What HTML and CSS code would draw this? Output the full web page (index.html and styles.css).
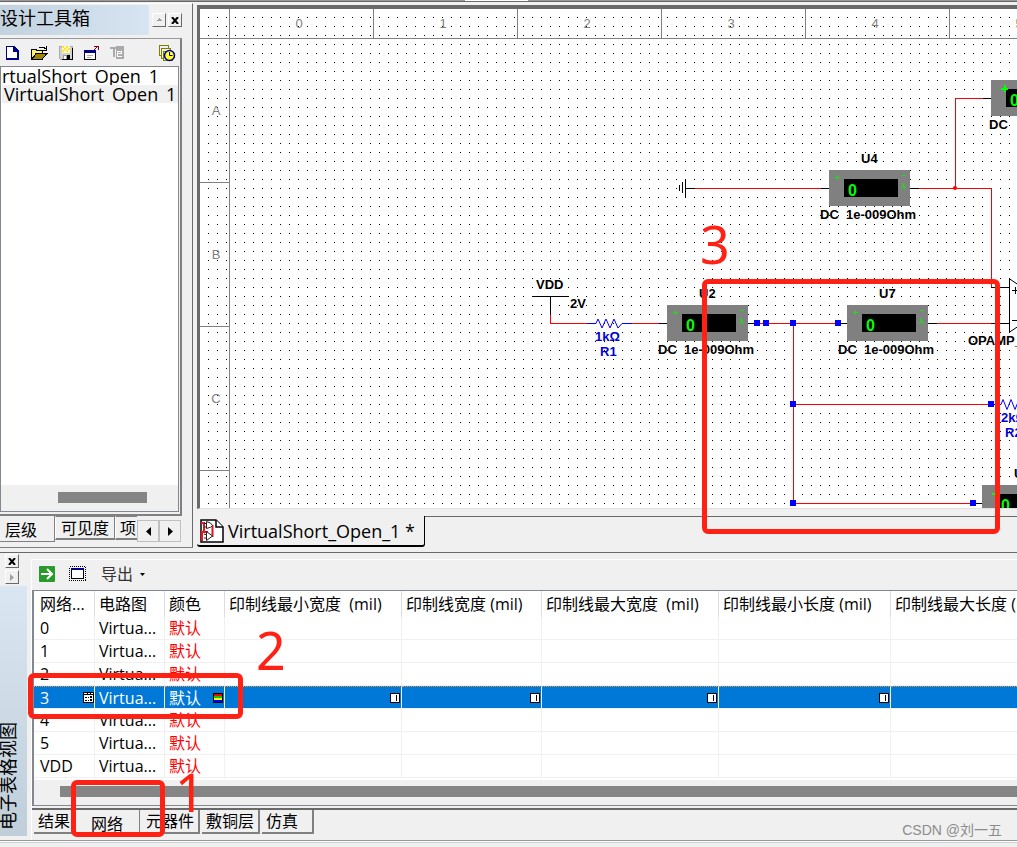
FILE: index.html
```html
<!DOCTYPE html>
<html lang="zh-CN">
<head>
<meta charset="utf-8">
<title>VirtualShort_Open_1</title>
<link rel="stylesheet" href="styles.css">
</head>
<body>
<div class="app">
  <div class="top-edge"><span class="top-edge-gap"></span></div>
  <div class="upper">
    <aside class="toolbox">
      <header class="toolbox-head">
        <h1 class="toolbox-title">设计工具箱</h1>
        <div class="head-buttons">
          <button class="mini" aria-label="折叠"><svg width="7" height="4"><path d="M3 0h1v1h1v1h1v1h-5v-1h1v-1h1z" fill="#a0a0a0"/></svg></button>
          <button class="mini" aria-label="关闭"><svg width="8" height="7"><path d="M1 0l6 7M7 0l-6 7" stroke="#000" stroke-width="2"/></svg></button>
        </div>
      </header>
      <div class="toolbox-body">
        <div class="toolbox-tools">
          <button class="tool" aria-label="新建"><svg width="16" height="16" shape-rendering="crispEdges"><path d="M2 1h8l5 5v9h-13z" fill="#fff"/><path d="M2.500 15v-13.500h8" fill="none" stroke="#00008b"/><path d="M10 1v5h5M10 2l4 4v8h-12" fill="none" stroke="#00008b" stroke-width="2"/></svg></button>
          <button class="tool" aria-label="打开"><svg width="18" height="16" shape-rendering="crispEdges"><path d="M1.500 14v-9l1-1h3l1 1h6v3h-6z" fill="#fff27a" stroke="#000"/><path d="M2 14.500l4-6h11l-5 6z" fill="#9a8600" stroke="#000"/><path d="M9.500 3l1-1h3l2 2M16.500 1v4h-4" fill="none" stroke="#000"/></svg></button>
          <button class="tool" aria-label="保存"><svg width="16" height="16" shape-rendering="crispEdges"><path d="M1 1h13v13h-12l-1-1z" fill="#d2d2d2" stroke="#aaa"/><path d="M4 1h8v7h-8z" fill="#fffbc0"/><path d="M4 1h2v2h-2zM8 1h2v2h-2zM6 3h2v2h-2zM10 3h2v2h-2zM4 5h2v2h-2zM8 5h2v2h-2z" fill="#ffe23a"/><path d="M14 3v11h-10" fill="none" stroke="#000"/><path d="M5 10h7v4h-7z" fill="#999"/><path d="M9 10h3v4h-3z" fill="#000"/><path d="M6 11h2v3h-2z" fill="#fff"/></svg></button>
          <button class="tool" aria-label="关闭窗口"><svg width="16" height="16" shape-rendering="crispEdges"><path d="M.5 5.500h11v9h-11z" fill="#fff" stroke="#000"/><path d="M0 5h12v3h-12z" fill="#00008b"/><path d="M3 10.500h6M3 12.500h4" stroke="#aaa"/><path d="M9.500 5.500l4-4M10 1h4v4" fill="none" stroke="#800010"/></svg></button>
          <button class="tool" aria-label="重命名" disabled><svg width="16" height="16" shape-rendering="crispEdges"><path d="M6 1h8v13h-8z" fill="#aaa"/><path d="M0 3h8M4 3v9" stroke="#aaa" stroke-width="2" fill="none"/><path d="M7.500 8.500h4v-2h-4v5h4" stroke="#fff" fill="none"/></svg></button>
          <button class="tool tool-last" aria-label="历史"><svg width="18" height="18"><g fill="#f0f0f0" stroke="#808000" shape-rendering="crispEdges"><path d="M1.500 1.500h9v10h-9z"/><path d="M3.500 4.500h9v10h-9z"/><path d="M5.500 7.500h9v9h-9z"/></g><circle cx="11.500" cy="11.500" r="5" fill="#ffff20" stroke="#00008b" stroke-width="1.500"/><path d="M11.500 8v3.500h3" fill="none" stroke="#00008b"/></svg></button>
        </div>
        <div class="tree">
          <div class="tree-row">rtualShort_Open_1</div>
          <div class="tree-row tree-row-on">VirtualShort_Open_1</div>
          <div class="tree-scroll"><span class="tree-thumb"></span></div>
        </div>
      </div>
      <nav class="side-tabs">
        <button class="side-tab side-tab-on">层级</button>
        <button class="side-tab">可见度</button>
        <button class="side-tab side-tab-cut">项</button>
        <button class="arrow" aria-label="向左"><svg width="5" height="9"><path d="M5 0v9l-5-4.500z"/></svg></button>
        <button class="arrow" aria-label="向右"><svg width="5" height="9"><path d="M0 0v9l5-4.500z"/></svg></button>
      </nav>
    </aside>

    <main class="workspace">
      <div class="canvas">
        <svg class="sheet" role="img" aria-label="电路图">
          <defs>
            <pattern id="dots" x="208" y="17" width="9" height="9" patternUnits="userSpaceOnUse"><rect width="1" height="1" fill="#000"/></pattern>
            <g id="meter">
              <rect width="81" height="36" fill="#808080"/>
              <rect x="15" y="9" width="54" height="18" fill="#000"/>
              <text x="19" y="26" class="digit">0</text>
              <path d="M73 5.500h4" stroke="#1fdc1f" shape-rendering="crispEdges"/>
              <path d="M72.500 19l2-3.500M73 13.500l1 .5 2.500 5" stroke="#1fdc1f" stroke-width="1.200" fill="none"/>
            </g>
            <path id="plus" d="M6 7.500h5M8.500 5v5" stroke="#1fdc1f" fill="none" shape-rendering="crispEdges"/>
            <path id="plus-big" d="M10 9h7M13.500 5v7" stroke="#00ff00" stroke-width="2" fill="none" shape-rendering="crispEdges"/>
            <rect id="node" x="-3" y="-3" width="6" height="6" fill="#00f"/>
          </defs>
          <g transform="translate(-200 -9)">
            <rect x="200" y="9" width="3000" height="2000" fill="url(#dots)" shape-rendering="crispEdges"/>
            <path class="ruler" d="M229.500 9v2000M200 38.500h3000M373.500 9v29M517.500 9v29M661.500 9v29M805.500 9v29M949.500 9v29M200 182.500h29M200 326.500h29M200 470.500h29"/>
            <g class="ruler-text">
              <text x="299" y="28">0</text><text x="443" y="28">1</text><text x="587" y="28">2</text><text x="731" y="28">3</text><text x="875" y="28">4</text><text x="1019" y="28">5</text>
              <text x="216" y="115">A</text><text x="216" y="259">B</text><text x="216" y="403">C</text>
            </g>
            <path class="wire" d="M695 188.500h126M919 188.500h72.500v99M955.500 188v-89.500h28M550.500 315v8.500h37M632 323.500h27M757 323.500h81M793.500 323v180M793 404.500h198M793 503.500h180M937 323.500h54"/>
            <path class="lead" d="M685.500 179v19M682.500 182v11M679.500 185v6M686 188.500h9M821 188.500h8M910 188.500h9M983 98.500h9M532 296.500h37M550.500 296v19M659 323.500h8M748 323.500h9M838 323.500h9M928 323.500h9M991 287.500h18M991 323.500h18M976 503.500h6"/>
            <path class="part" d="M1009.500 278v54M1009 278.500l40 27-40 27M1012 290.500h6M1015.500 287v7M1012 320.500h8"/>
            <path class="resistor" d="M587 323.500h9l2-4.500 4 9 4-9 4 9 4-9 4 9 4-4.500h10M994 404.500h7l2-5 4 10 4-10 4 10 4-10"/>
            <circle cx="955" cy="188" r="2" fill="#f00"/>
            <use href="#meter" x="829" y="170"/><use href="#plus" x="829" y="170"/>
            <use href="#meter" x="667" y="305"/><use href="#plus" x="667" y="305"/>
            <use href="#meter" x="847" y="305"/><use href="#plus" x="847" y="305"/>
            <use href="#meter" x="991" y="80"/><use href="#plus-big" x="991" y="80"/>
            <use href="#meter" x="982" y="485"/><use href="#plus-big" x="982" y="485"/>
            <g class="label">
              <text x="861" y="163">U4</text><text x="820" y="219" xml:space="preserve">DC  1e-009Ohm</text>
              <text x="699" y="298">U2</text><text x="658" y="354" xml:space="preserve">DC  1e-009Ohm</text>
              <text x="879" y="298">U7</text><text x="838" y="354" xml:space="preserve">DC  1e-009Ohm</text>
              <text x="989" y="129">DC</text><text x="1014" y="478">U5</text>
              <text x="536" y="289">VDD</text><text x="570" y="308">2V</text>
              <text x="968" y="345">OPAMP_3T</text>
            </g>
            <g class="label label-blue">
              <text x="595" y="341">1kΩ</text><text x="600" y="356">R1</text>
              <text x="1001" y="422">2kΩ</text><text x="1005" y="437">R2</text>
            </g>
            <use href="#node" x="757" y="323"/><use href="#node" x="766" y="323"/><use href="#node" x="793" y="323"/><use href="#node" x="838" y="323"/>
            <use href="#node" x="793" y="404"/><use href="#node" x="991" y="404"/><use href="#node" x="793" y="503"/><use href="#node" x="973" y="503"/>
          </g>
        </svg>
      </div>
      <nav class="doc-tabs">
        <button class="doc-tab">
          <svg width="24" height="24"><path d="M1 1h15l7 7v15h-22z" fill="#fff" stroke="#000" stroke-width="1.500"/><path d="M16 1v7h7" fill="#fff" stroke="#000" stroke-width="1.500"/><path d="M1 4h3v9h-2v9M4 13h4M9 7h3.500v10h-5" fill="none" stroke="#f01020" stroke-width="2"/><path d="M6.500 2.500q5 1 6 4-1 2-6 3zM6.500 12.500l6 4.500-6 4.500z" fill="#fff" stroke="#222"/><path d="M4 4.500h3M4 8h3M4 15l3 1M4 19h3" stroke="#222"/></svg>
          <span>VirtualShort_Open_1 *</span>
        </button>
        <span class="doc-line"></span>
      </nav>
    </main>
  </div>

  <section class="lower">
    <div class="grip">
      <button class="mini" aria-label="关闭"><svg width="8" height="7"><path d="M1 0l6 7M7 0l-6 7" stroke="#000" stroke-width="2"/></svg></button>
      <button class="mini" aria-label="展开"><svg width="4" height="7"><path d="M0 0l4 3.500-4 3.500z" fill="#a0a0a0"/></svg></button>
      <div class="grip-title">电子表格视图</div>
    </div>
    <div class="sheet-view">
      <div class="sheet-tools">
        <button class="tool" aria-label="转到"><svg width="16" height="16"><rect width="16" height="16" rx="1" fill="#299b2d"/><path d="M2 8h11M8 3l5 5-5 5" fill="none" stroke="#fff" stroke-width="2"/></svg></button>
        <button class="tool" aria-label="选择"><svg width="18" height="16" shape-rendering="crispEdges"><rect x=".5" y=".5" width="16" height="14" fill="none" stroke="#000" stroke-dasharray="1 1"/><rect x="2.500" y="2.500" width="12" height="10" fill="#fff" stroke="#000"/><path d="M2 2h13v2h-13z" fill="#00008b"/></svg></button>
        <button class="export">导出 <svg width="5" height="3"><path d="M0 0h5l-2.500 3z"/></svg></button>
      </div>
      <div class="grid-box">
        <table class="grid">
          <colgroup><col class="c-net"><col class="c-sch"><col class="c-color"><col class="c-wide"><col class="c-mid"><col class="c-wide"><col class="c-len"><col class="c-len"></colgroup>
          <thead><tr><th>网络...</th><th>电路图</th><th>颜色</th><th>印制线最小宽度&nbsp; (mil)</th><th>印制线宽度 (mil)</th><th>印制线最大宽度&nbsp; (mil)</th><th>印制线最小长度 (mil)</th><th>印制线最大长度 (mil)</th></tr></thead>
          <tbody>
            <tr><td>0</td><td>Virtua...</td><td class="red">默认</td><td></td><td></td><td></td><td></td><td></td></tr>
            <tr><td>1</td><td>Virtua...</td><td class="red">默认</td><td></td><td></td><td></td><td></td><td></td></tr>
            <tr><td>2</td><td>Virtua...</td><td class="red">默认</td><td></td><td></td><td></td><td></td><td></td></tr>
            <tr class="selected">
              <td><div class="cell"><span>3</span><button class="cell-btn" aria-label="编辑网络"><svg width="11" height="11" shape-rendering="crispEdges"><path d="M0 0h11v11h-11z"/><path d="M1 1h3v1h-3zM5 1h2v1h-2zM8 1h2v1h-2zM1 3h9v7h-9z" fill="#fff"/><path d="M2 5h2v1h-2zM2 8h2v1h-2zM5 5h1v1h-1zM5 8h1v1h-1zM7 4h2v2h-2zM7 7h2v2h-2z"/></svg></button></div></td>
              <td>Virtua...</td>
              <td><div class="cell cell-pad"><span>默认</span><button class="cell-btn" aria-label="颜色"><svg width="10" height="10" shape-rendering="crispEdges"><path d="M0 0h10v10h-10z"/><path d="M1 1h8v2h-8z" fill="#f00"/><path d="M1 3h8v2h-8z" fill="#0c0"/><path d="M1 5h8v2h-8z" fill="#ff0"/><path d="M1 7h8v2h-8z" fill="#00f"/></svg></button></div></td>
              <td><div class="cell cell-pad cell-end"><button class="cell-btn value-btn" aria-label="编辑"></button></div></td>
              <td><div class="cell cell-pad cell-end"><button class="cell-btn value-btn" aria-label="编辑"></button></div></td>
              <td><div class="cell cell-pad cell-end"><button class="cell-btn value-btn" aria-label="编辑"></button></div></td>
              <td><div class="cell cell-pad cell-end"><button class="cell-btn value-btn" aria-label="编辑"></button></div></td>
              <td></td>
            </tr>
            <tr><td>4</td><td>Virtua...</td><td class="red">默认</td><td></td><td></td><td></td><td></td><td></td></tr>
            <tr><td>5</td><td>Virtua...</td><td class="red">默认</td><td></td><td></td><td></td><td></td><td></td></tr>
            <tr><td>VDD</td><td>Virtua...</td><td class="red">默认</td><td></td><td></td><td></td><td></td><td></td></tr>
          </tbody>
        </table>
        <div class="grid-scroll"><span class="grid-thumb"></span></div>
      </div>
      <div class="foot">
        <nav class="foot-tabs">
          <button class="foot-tab">结果</button>
          <button class="foot-tab foot-tab-on">网络</button>
          <button class="foot-tab">元器件</button>
          <button class="foot-tab">敷铜层</button>
          <button class="foot-tab foot-tab-last">仿真</button>
        </nav>
        <span class="watermark">CSDN @刘一五</span>
      </div>
    </div>
  </section>
  <div class="bottom-edge"></div>

  <div class="mark mark-net"></div><span class="num num-net">1</span>
  <div class="mark mark-row"></div><span class="num num-row">2</span>
  <div class="mark mark-wire"></div><span class="num num-wire">3</span>
</div>
</body>
</html>
```
FILE: styles.css
```css
* { box-sizing: border-box; }
body {
  margin: 0;
  background: #f0f0f0;
  color: #000;
  font: 16px/22px "Open Sans", "Noto Sans CJK SC", sans-serif;
}
button {
  margin: 0;
  padding: 0;
  border: 0;
  background: none;
  color: inherit;
  font: inherit;
}
svg { display: block; flex: none; }
.app {
  position: relative;
  display: flex;
  flex-direction: column;
  height: 100vh;
  overflow: hidden;
}
.top-edge {
  flex: none;
  height: 2px;
  background: #999;
  border-bottom: 1px solid #696969;
}
.top-edge-gap { display: block; width: 63px; height: 1px; margin-left: 465px; background: #fff; }
.upper { flex: 1; display: flex; min-height: 0; margin-bottom: 4px; }

/* Design toolbox */
.toolbox {
  flex: none;
  display: flex;
  flex-direction: column;
  width: 193px;
  margin-top: 1px;
  padding-top: 1px;
  border-top: 1px solid #fff;
  border-right: 1px solid #696969;
  border-bottom: 1px solid #808080;
}
.toolbox-head { flex: none; display: flex; justify-content: space-between; height: 30px; padding-right: 10px; }
.toolbox-title {
  width: 149px;
  height: 30px;
  margin: 0;
  background: linear-gradient(90deg, #c3d2df, #d7e5f2);
  font-size: 18px;
  font-weight: 400;
  line-height: 26px;
}
.head-buttons { display: flex; gap: 2px; padding-top: 8px; }
.mini {
  display: flex;
  align-items: center;
  justify-content: center;
  width: 14px;
  height: 14px;
  border: 1px solid;
  border-color: #fff #696969 #696969 #fff;
}
.toolbox-body {
  flex: 1;
  display: flex;
  flex-direction: column;
  min-height: 0;
  margin: 3px 10px 0 0;
  border-top: 1px solid #999;
  border-right: 2px solid #808080;
  border-bottom: 2px solid #808080;
}
.toolbox-tools { flex: none; display: flex; align-items: center; gap: 10px; height: 27px; padding: 0 4px; }
.tool-last { margin-left: auto; }
.tree {
  flex: 1;
  display: flex;
  flex-direction: column;
  min-height: 0;
  margin: 0 1px 2px 0;
  border: 1px solid #828790;
  background: #fff;
}
.tree-row {
  height: 18px;
  padding-left: 1px;
  overflow: hidden;
  font-size: 18px;
  line-height: 18px;
  white-space: nowrap;
}
.tree-row-on { margin-left: 1px; padding-left: 2px; background: #f0f0f0; }
.tree-scroll { height: 26px; margin-top: auto; padding: 7px 0 0 57px; background: #f0f0f0; }
.tree-thumb { display: block; width: 89px; height: 11px; background: #858585; }
.side-tabs { flex: none; display: flex; align-items: flex-start; height: 31px; }
.side-tab {
  flex: none;
  height: 24px;
  padding: 0 5px;
  border: 1px solid #808080;
  border-left-color: #fff;
  border-bottom-width: 2px;
  line-height: 20px;
  white-space: nowrap;
}
.side-tab-on { width: 55px; height: 26px; padding: 3px 0 0 5px; border-width: 0 1px 1px 0; text-align: left; }
.side-tab-cut { width: 22px; padding: 0 0 0 4px; border-right: 0; overflow: hidden; text-align: left; }
.arrow {
  display: flex;
  align-items: center;
  justify-content: center;
  width: 22px;
  height: 22px;
  margin-top: 4px;
  border: 1px solid #c0c0c0;
}

/* Schematic */
.workspace { flex: 1; display: flex; flex-direction: column; min-width: 0; padding: 3px 0 0 4px; }
.canvas {
  flex: 1;
  min-height: 0;
  overflow: hidden;
  border-top: 4px solid #696969;
  border-left: 3px solid #696969;
  border-bottom: 1px solid #e0e0e0;
  background: #fff;
}
.sheet { width: 100%; height: 100%; }
.ruler { fill: none; stroke: #808080; shape-rendering: crispEdges; }
.ruler-text { fill: #808080; font: 13px "Liberation Sans", sans-serif; text-anchor: middle; }
.wire { fill: none; stroke: #f00; shape-rendering: crispEdges; }
.lead { fill: none; stroke: #000; shape-rendering: crispEdges; }
.part { fill: none; stroke: #000; }
.resistor { fill: none; stroke: #00f; }
.label { font: bold 13px "Liberation Sans", sans-serif; }
.label-blue { fill: #0000d8; }
.digit { fill: #0f0; font: bold 16px "Liberation Sans", sans-serif; }
.doc-tabs { flex: none; display: flex; height: 39px; padding-top: 7px; }
.doc-tab {
  display: flex;
  align-items: center;
  gap: 4px;
  height: 31px;
  padding: 0 9px 0 3px;
  border-right: 1px solid #000;
  border-bottom: 2px solid #000;
  border-radius: 0 0 3px 3px;
  font-size: 18px;
  white-space: nowrap;
}
.doc-line { flex: 1; border-top: 1px solid #696969; }

/* Spreadsheet view */
.lower { flex: none; display: flex; border-top: 1px solid #696969; }
.grip { flex: none; display: flex; flex-direction: column; gap: 2px; width: 31px; padding-top: 1px; }
.grip .mini { flex: none; margin-left: 5px; }
.grip-title {
  flex: 1;
  width: 27px;
  margin-bottom: 4px;
  padding-top: 6px;
  background: linear-gradient(#c0ceda, #dae7f3);
  font-size: 18px;
  line-height: 16px;
  white-space: nowrap;
  writing-mode: vertical-rl;
  text-orientation: sideways;
  transform: rotate(180deg);
}
.sheet-view { flex: 1; min-width: 0; margin-top: 6px; border-top: 1px solid #fff; border-left: 1px solid #fff; }
.sheet-tools { display: flex; align-items: center; gap: 14px; height: 30px; padding: 0 0 2px 7px; }
.export { display: flex; align-items: center; gap: 7px; color: #333; }
.grid-box { border-top: 1px solid #828790; border-left: 2px solid #828790; border-bottom: 1px solid #828790; overflow: hidden; background: #fff; }
.grid { width: 1029px; min-width: 100%; border-collapse: separate; border-spacing: 0; table-layout: fixed; }
.c-net { width: 61px; }
.c-sch { width: 70px; }
.c-color { width: 60px; }
.c-wide { width: 177px; }
.c-mid { width: 140px; }
.c-len { width: 172px; }
.grid th, .grid td {
  height: 23px;
  padding: 0 0 0 4px;
  overflow: hidden;
  border-right: 1px solid #f0f0f0;
  border-bottom: 1px solid #f0f0f0;
  font-weight: 400;
  text-align: left;
  white-space: nowrap;
}
.grid th { height: 26px; border-right-color: #dcdcdc; border-bottom: 0; }
.grid th:first-child, .grid td:first-child { padding-left: 6px; }
.grid .red { color: #f00; }
.grid .selected td { border-top: 1px dotted #e8963c; background: #0078d7; color: #fff; line-height: 20px; }
.cell { display: flex; align-items: center; justify-content: space-between; height: 20px; }
.cell-pad { padding-right: 1px; }
.cell-end { justify-content: flex-end; }
.value-btn { width: 10px; height: 10px; border: 1px solid #000; background: linear-gradient(#000, #000) 5px 1px / 1px 6px no-repeat #fff; }
.grid-scroll { height: 25px; margin-top: 2px; padding: 6px 0 0 26px; background: #f0f0f0; }
.grid-thumb { display: block; height: 11px; background: #858585; }
.foot { display: flex; align-items: flex-start; justify-content: space-between; height: 32px; margin-top: 2px; border-top: 2px solid #696969; }
.foot-tabs { display: flex; gap: 2px; padding-left: 2px; }
.foot-tab {
  height: 24px;
  padding: 0 4px;
  border-right: 2px solid #808080;
  border-bottom: 2px solid #808080;
  white-space: nowrap;
}
.foot-tab-on { height: 25px; padding: 2px 16px 0 13px; border-bottom: 0; border-right-width: 1px; }
.foot-tab-last { padding-right: 14px; }
.watermark { padding: 9px 15px 0 0; color: #8c8c8c; font: 14px/22px "Liberation Sans", "Noto Sans CJK SC", sans-serif; }
.bottom-edge { flex: none; height: 7px; border-top: 1px solid #999; box-shadow: inset 0 1px #fff, inset 0 2px #d0d0d0; }

/* Callouts over the window */
.mark { position: absolute; border: 5px solid #ff2214; border-radius: 6px; }
.mark-net { left: 71px; top: 780px; width: 94px; height: 57px; }
.mark-row { left: 28px; top: 673px; width: 215px; height: 46px; }
.mark-wire { left: 702px; top: 279px; width: 298px; height: 255px; }
.num { position: absolute; color: #ff2214; font: 52px/60px "Noto Sans", sans-serif; }
.num-net { left: 175px; top: 762px; }
.num-row { left: 256px; top: 620px; }
.num-wire { left: 700px; top: 214px; }
```
